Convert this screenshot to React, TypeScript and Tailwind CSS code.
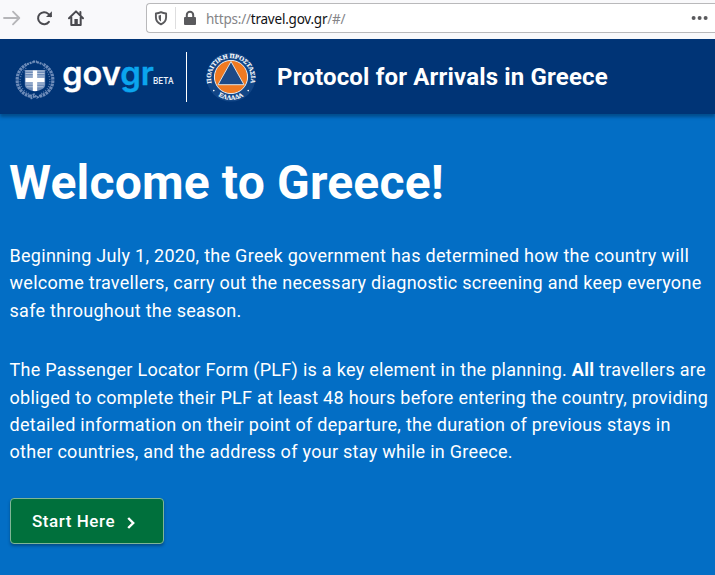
const paragraphs = [
  [
    "Beginning July 1, 2020, the Greek government has determined how the country will",
    "welcome travellers, carry out the necessary diagnostic screening and keep everyone",
    "safe throughout the season."
  ],
  [
    "The Passenger Locator Form (PLF) is a key element in the planning. **All** travellers are",
    "obliged to complete their PLF at least 48 hours before entering the country, providing",
    "detailed information on their point of departure, the duration of previous stays in",
    "other countries, and the address of your stay while in Greece."
  ]
];

const Line = ({ text }: { text: string }) => (
  <span className="block whitespace-nowrap">
    {text.split("**").map((part, index) =>
      index % 2 ? <strong key={index} className="font-bold">{part}</strong> : part
    )}
  </span>
);

const Toolbar = () => (
  <div className="flex h-[39px] shrink-0 items-start bg-[#f9f9fb]">
    <svg className="mt-[2px] h-8 w-[146px] shrink-0" viewBox="0 2 146 32" fill="none" strokeLinecap="round" strokeLinejoin="round">
      <path d="M4 18h15M13 11.7l6.3 6.3-6.3 6.3" stroke="#b5b5b8" strokeWidth="1.8" />
      <path d="M48.9 21.8a6 6 0 1 1-.6-7.9l2.3 2.4" stroke="#4a4a4f" strokeWidth="2" />
      <path d="M51.9 11.2v5.9H46z" fill="#4a4a4f" />
      <path d="M69 18.2l7-6.8 7 6.8M71.3 17v8h9.4v-8" stroke="#4a4a4f" strokeWidth="2" />
      <path d="M74.4 25v-6h3.4v6z" fill="#4a4a4f" />
      <path d="M80.4 12v2.4" stroke="#4a4a4f" strokeWidth="2" />
    </svg>
    <div className="mt-[3px] flex h-[30px] flex-1 items-center rounded-l-sm border border-r-0 border-[#b9b9bb] bg-white">
      <svg className="h-7 w-[58px] shrink-0" viewBox="147 4 58 28">
        <path d="M161 12.2c1.7.9 3.4 1.2 5.1 1.3v3.8c0 3.4-1.8 5.6-5.1 7.1-3.3-1.5-5.1-3.7-5.1-7.1v-3.8c1.7-.1 3.4-.4 5.1-1.3z" fill="none" stroke="#5a5a5d" strokeWidth="1.9" strokeLinejoin="round" />
        <path d="M161 14.8v6.7c-1.5-1-2.4-2.3-2.4-4.2v-1.9c.9-.1 1.7-.3 2.4-.6z" fill="#5a5a5d" />
        <path d="M175.5 7v22" stroke="#dededf" />
        <rect x="184" y="17" width="12" height="8" rx="1" fill="#5a5a5d" />
        <path d="M186.8 17.5v-2.6a3.2 3.2 0 0 1 6.4 0v2.6" fill="none" stroke="#5a5a5d" strokeWidth="2" />
      </svg>
      <span className="flex-1 pl-px pt-[2px] font-['Noto_Sans',sans-serif] text-[13.5px] leading-5 tracking-[-0.22px] text-[#858588]">
        https://<span className="text-[#111115]">travel.gov.gr</span>/#/
      </span>
      <svg className="mr-[6px] h-4 w-[18px]" viewBox="0 0 18 16" fill="#5a5a5d">
        <circle cx="2.6" cy="8" r="2" />
        <circle cx="8.6" cy="8" r="2" />
        <circle cx="14.6" cy="8" r="2" />
      </svg>
    </div>
  </div>
);

const Emblem = () => (
  <svg className="h-[42px] w-[42px]" viewBox="0 0 42 42" fill="none">
    <path d="M16.5 37.3C7 35 2 27 3.4 18 4.2 12.5 7.5 8.4 12.5 5.4M25.5 37.3C35 35 40 27 38.6 18 37.8 12.5 34.5 8.4 29.5 5.4" stroke="#6b8ab8" strokeWidth="3.2" strokeDasharray="2.6 .7" />
    <path d="M15 34.5C8 31.5 5 25.5 6.5 18.5c.8-4.5 3-7.6 6.5-10M27 34.5c7-3 10-9 8.5-16-.8-4.5-3-7.6-6.5-10" stroke="#5679ac" strokeWidth="1.5" strokeDasharray="1 1.5" />
    <path d="M13 5.3l6-2.2M23 3.1l6 2.2M19 2.7h4M16 37l4-1.5 3 3 4-2M16.5 39.5l4-2" stroke="#7290bb" strokeWidth="2.2" strokeDasharray="2 .8" />
    <path d="M10.8 11h20.4v14.7c0 3.8-4.3 5.3-10.2 6.9-5.9-1.6-10.2-3.1-10.2-6.9z" fill="#6e8bb8" />
    <path d="M11.5 12h19M11.5 14.5h19M11.5 17h19M11.5 25h19M12.5 27.8h17" stroke="#b4c5dc" strokeWidth="1.1" />
    <path d="M21 11.5v20.5M11.5 21h19" stroke="#fff" strokeWidth="4.3" />
  </svg>
);

const GovLogo = () => (
  <svg className="h-[50px] w-[112px] overflow-visible" viewBox="0 -6 112 50">
    <g fontFamily="Inter, sans-serif" fontWeight="600" strokeWidth=".3">
      <text x="-.7" y="26.2" fontSize="33" fill="#fff" stroke="#fff" textLength="58.5" lengthAdjust="spacingAndGlyphs">gov</text>
      <text x="57.2" y="26.2" fontSize="33" fill="#0ba5ee" stroke="#0ba5ee" textLength="33.8" lengthAdjust="spacingAndGlyphs">gr</text>
      <text x="90" y="25.2" fontSize="9" fontFamily="Roboto, sans-serif" fontWeight="500" fill="#e8f0fa" stroke="none" textLength="20.5" lengthAdjust="spacingAndGlyphs">BETA</text>
    </g>
  </svg>
);

const CivilProtection = () => (
  <svg className="h-[52px] w-[52px] overflow-visible" viewBox="0 0 52 52">
    <defs>
      <path id="ring-top" d="M8.3 36.3A20 20 0 1 1 43.7 36.3" />
      <path id="ring-bottom" d="M7.3 39.3A23.2 23.2 0 0 0 44.7 39.3" />
    </defs>
    <circle cx="26" cy="26" r="24.6" fill="#124687" />
    <circle cx="26" cy="26" r="16.6" fill="#f07a22" stroke="#e9edf3" strokeWidth="1" />
    <path d="M26 10.5L39 33.7H13z" fill="#1d4a87" stroke="#dce0e4" strokeWidth="1" />
    <g fill="#fff" stroke="#fff" strokeWidth=".15" fontFamily="Liberation Serif, serif" fontWeight="700">
      <text fontSize="6.4"><textPath href="#ring-top" startOffset="50%" textAnchor="middle">ΠΟΛΙΤΙΚΗ ΠΡΟΣΤΑΣΙΑ</textPath></text>
      <text fontSize="6.4"><textPath href="#ring-bottom" startOffset="50%" textAnchor="middle">ΕΛΛΑΔΑ</textPath></text>
    </g>
    <circle cx="8.8" cy="39.6" r=".8" fill="#fff" />
    <circle cx="43.2" cy="39.6" r=".8" fill="#fff" />
  </svg>
);

const Header = () => (
  <header className="flex h-[75px] shrink-0 items-start bg-[#003476] shadow-[0_3px_3px_rgba(0,60,110,0.65)]">
    <div className="ml-[14px] mt-[20px]"><Emblem /></div>
    <div className="ml-[7px] mt-[14px]"><GovLogo /></div>
    <div className="ml-[11px] mt-[13px] h-[50px] w-px bg-white" />
    <div className="ml-[18px] mt-[12px]"><CivilProtection /></div>
    <h2 className="ml-[20px] mt-[22px] whitespace-nowrap text-[24px] font-bold leading-8 tracking-[0.17px] text-white">Protocol for Arrivals in Greece</h2>
  </header>
);

const App = () => {
  return (
    <div className="flex h-[575px] w-[715px] flex-col overflow-hidden bg-[#036ec5] font-[Roboto,sans-serif]">
      <Toolbar />
      <Header />
      <main className="pl-[10px] text-white">
        <h1 className="-ml-px mt-[41px] whitespace-nowrap text-[48px] font-bold leading-[56px] tracking-[0.18px]">Welcome to Greece!</h1>
        <p className="-ml-[0.5px] mt-[31px] text-[18px] leading-[27.4px] tracking-[0.285px]">
          {paragraphs[0].map((line) => <Line key={line} text={line} />)}
        </p>
        <p className="-ml-[0.5px] mt-[32px] text-[18px] leading-[27.4px] tracking-[0.285px]">
          {paragraphs[1].map((line) => <Line key={line} text={line} />)}
        </p>
        <button className="mt-[32px] flex h-[46px] w-[154px] items-center rounded-[4px] border border-[#7fb596] bg-[#00703c] pl-[21px] pt-px text-[17px] font-medium tracking-[0.55px] shadow-[0_2px_3px_rgba(0,0,0,0.3)]">
          Start Here
          <svg className="ml-[12px] mt-[3px] h-3 w-2" viewBox="0 0 8 12" fill="none" stroke="#fff" strokeWidth="2.4">
            <path d="M1.2 1l5 5-5 5" />
          </svg>
        </button>
      </main>
    </div>
  );
};

export default App;
